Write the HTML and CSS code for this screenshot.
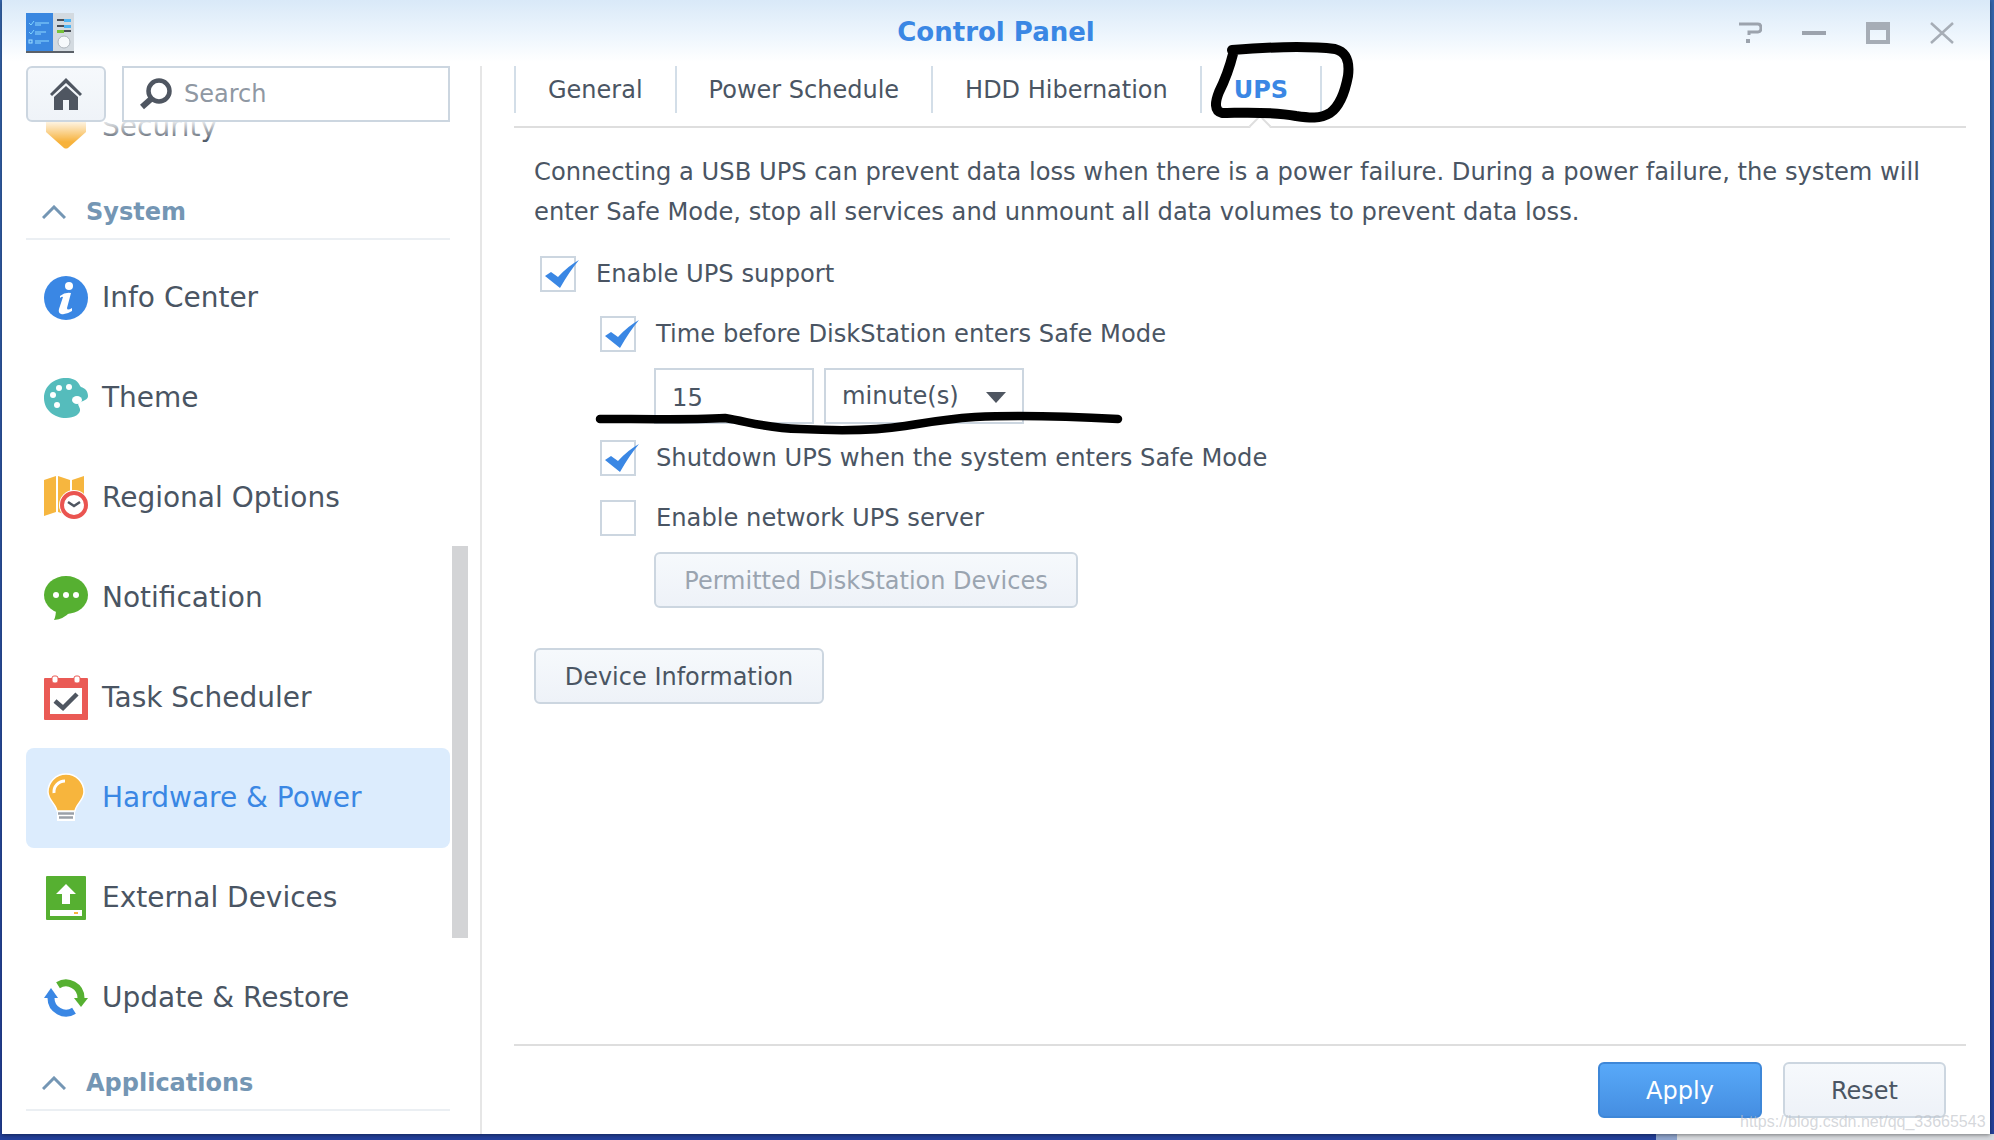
FILE: index.html
```html
<!DOCTYPE html>
<html lang="en">
<head>
    <meta charset="utf-8" />
    <title>Control Panel</title>
    <link rel="stylesheet" href="styles.css">
</head>
<body>
    <div class="window">
        <div class="titlebar">
            <svg class="app-icon" viewBox="0 0 48 40">
                <rect x="0" y="0" width="27" height="39" fill="#3a87e0"/>
                <rect x="27" y="0" width="21" height="39" fill="#d3dae0"/>
                <rect x="0" y="38" width="48" height="2" fill="#5a6068"/>
                <path d="M3 10l2 2 3-4M3 19l2 2 3-4" stroke="#7fd4ff" fill="none"/>
                <rect x="3" y="27" width="3" height="3" fill="none" stroke="#9fe0ff"/>
                <path d="M9 10h14M9 12h6M9 19h11M9 21h6M9 28h14M9 30h6" stroke="#8fd8ff"/>
                <path d="M31 7h14M31 13h14M31 18h14" stroke="#4a5058" stroke-width="2"/>
                <rect x="38" y="6" width="7" height="3" fill="#4fb4f4"/>
                <rect x="38" y="12" width="7" height="3" fill="#4fb4f4"/>
                <rect x="31" y="17" width="7" height="3" fill="#76c23a"/>
                <circle cx="38" cy="29" r="6" fill="#f6f9fb" stroke="#aeb6bd"/>
            </svg>
            <h1 class="title">Control Panel</h1>
            <div class="win-controls">
                <svg viewBox="0 0 24 22"><path d="M1 2h19q3 0 3 4t-3 4h-9v3" fill="none" stroke="#9ca3ad" stroke-width="3"/><rect x="8" y="17" width="4" height="4" fill="#9ca3ad"/></svg>
                <svg viewBox="0 0 24 22"><rect x="0" y="9" width="24" height="4" fill="#9ca3ad"/></svg>
                <svg viewBox="0 0 24 22"><path d="M0 0h24v22H0zM4 8v10h16V8z" fill="#a6adb6" fill-rule="evenodd"/></svg>
                <svg viewBox="0 0 24 22"><path d="M1 1l22 20M23 1L1 21" stroke="#a6adb6" stroke-width="2.5"/></svg>
            </div>
        </div>

        <div class="body">
            <aside class="sidebar">
                <div class="toolbar">
                    <button class="home-btn">
                        <svg viewBox="0 0 32 32" width="32" height="32"><path d="M16 0L32 16l-2 2L16 5 2 18l-2-2z" fill="#4f5661"/><path d="M16 8L28 19v13H19V22h-6v10H4V19z" fill="#4f5661"/></svg>
                    </button>
                    <div class="search">
                        <svg viewBox="0 0 32 32" width="32" height="32"><circle cx="19" cy="13" r="10.500" fill="none" stroke="#4f5661" stroke-width="4.500"/><path d="M11 21L2 29" stroke="#4f5661" stroke-width="6"/></svg>
                        <span>Search</span>
                    </div>
                </div>

                <div class="nav">
                    <div class="nav-item nav-item-scrolled">
                        <svg class="nav-icon" viewBox="0 0 44 44"><path d="M2 0h40v27L24 43q-2 1-4 0L2 27z" fill="#f7b23b"/></svg>
                        <span>Security</span>
                    </div>
                    <div class="nav-section">
                        <svg viewBox="0 0 24 14" width="24" height="14"><path d="M1 13L12 2l11 11" fill="none" stroke="#7496b4" stroke-width="3"/></svg>
                        <span>System</span>
                    </div>
                    <div class="nav-item">
                        <svg class="nav-icon" viewBox="0 0 44 44"><circle cx="22" cy="22" r="22" fill="#3a87e4"/><circle cx="25" cy="10" r="4" fill="#fff"/><path d="M16 20Q21 16 27 17L23 32Q23 35 28 32L28 35Q22 39 17 38 14 37 15 33L19 21Q18 20 16 22z" fill="#fff"/></svg>
                        <span>Info Center</span>
                    </div>
                    <div class="nav-item">
                        <svg class="nav-icon" viewBox="0 0 44 44"><path d="M22 2C10 2 0 10 0 22c0 12 10 20 22 20 8 0 15-4 14-9-1-4-4-5 1-7 4-2 7-3 7-6 0-5-3-8-7-9C35 9 34 2 22 2z" fill="#55bcbc"/><circle cx="15" cy="12" r="3" fill="#fff"/><circle cx="25" cy="11" r="3" fill="#fff"/><circle cx="9" cy="19" r="3" fill="#fff"/><ellipse cx="33" cy="24" rx="5" ry="4" fill="#fff"/><circle cx="13" cy="29" r="3" fill="#fff"/></svg>
                        <span>Theme</span>
                    </div>
                    <div class="nav-item">
                        <svg class="nav-icon" viewBox="0 0 44 44"><path d="M0 4L12 0v36L0 40zM14 0l12 4v36l-12-4zM28 4l12-4v36l-12 4z" fill="#f6b63f"/><circle cx="30" cy="29" r="15" fill="#fff"/><circle cx="30" cy="29" r="12" fill="#fff" stroke="#ea5450" stroke-width="4"/><path d="M24 26l6 4 6-4" fill="none" stroke="#4f5661" stroke-width="2.500"/></svg>
                        <span>Regional Options</span>
                    </div>
                    <div class="nav-item">
                        <svg class="nav-icon" viewBox="0 0 44 44"><ellipse cx="22" cy="19" rx="22" ry="19" fill="#56b031"/><path d="M12 33q0 7-2 11 10-1 16-8z" fill="#56b031"/><circle cx="12" cy="19" r="3" fill="#fff"/><circle cx="22" cy="19" r="3" fill="#fff"/><circle cx="32" cy="19" r="3" fill="#fff"/></svg>
                        <span>Notification</span>
                    </div>
                    <div class="nav-item">
                        <svg class="nav-icon" viewBox="0 0 44 44"><rect x="0" y="2" width="44" height="42" rx="1" fill="#ea5a55"/><rect x="6" y="12" width="32" height="26" fill="#fff"/><rect x="8" y="0" width="6" height="7" rx="2" fill="#fff" stroke="#ea5a55"/><rect x="30" y="0" width="6" height="7" rx="2" fill="#fff" stroke="#ea5a55"/><path d="M11 25l8 7 14-14" fill="none" stroke="#4f5661" stroke-width="4.500"/></svg>
                        <span>Task Scheduler</span>
                    </div>
                    <div class="nav-item nav-item-active">
                        <svg class="nav-icon" viewBox="0 0 44 48"><path d="M22 0a18 18 0 0 1 18 18c0 8-8 12-9 19H13c-1-7-9-11-9-19A18 18 0 0 1 22 0z" fill="#f7b53d" stroke="#fff" stroke-width="1.500"/><path d="M10 19a11 11 0 0 1 11-12" fill="none" stroke="#fff" stroke-width="3"/><path d="M13 38h18v9H13z" fill="#fff"/><path d="M14 39.500h16M15 43.500h14" stroke="#9aa0a8" stroke-width="2.500"/></svg>
                        <span>Hardware &amp; Power</span>
                    </div>
                    <div class="nav-item">
                        <svg class="nav-icon" viewBox="0 0 44 44"><rect x="2" y="0" width="40" height="44" rx="1" fill="#56b031"/><path d="M22 8l10 10h-6v10h-8V18h-6z" fill="#fff"/><rect x="6" y="34" width="32" height="6" fill="#fff"/><rect x="30" y="36" width="4" height="2" fill="#f6b63f"/></svg>
                        <span>External Devices</span>
                    </div>
                    <div class="nav-item">
                        <svg class="nav-icon" viewBox="0 0 44 44"><path d="M14 9.300A15 15 0 0 1 37 22" fill="none" stroke="#56b031" stroke-width="7"/><path d="M30 22h14l-7 9z" fill="#56b031"/><path d="M30 34.700A15 15 0 0 1 7 22" fill="none" stroke="#3a87e4" stroke-width="7"/><path d="M0 22h14L7 12z" fill="#3a87e4"/></svg>
                        <span>Update &amp; Restore</span>
                    </div>
                    <div class="nav-section">
                        <svg viewBox="0 0 24 14" width="24" height="14"><path d="M1 13L12 2l11 11" fill="none" stroke="#7496b4" stroke-width="3"/></svg>
                        <span>Applications</span>
                    </div>
                </div>
                <div class="scrollbar"></div>
            </aside>

            <main class="main">
                <div class="tabs">
                    <div class="tab">General</div>
                    <div class="tab">Power Schedule</div>
                    <div class="tab">HDD Hibernation</div>
                    <div class="tab tab-active">UPS</div>
                </div>

                <div class="content">
                    <p class="intro">Connecting a USB UPS can prevent data loss when there is a power failure. During a power failure, the system will enter Safe Mode, stop all services and unmount all data volumes to prevent data loss.</p>

                    <div class="check-row row-top">
                        <span class="checkbox"><svg viewBox="0 0 40 32" width="40" height="32"><path d="M5 20l6-4 7 5Q28 10 39 4 29 16 20 32z" fill="#3a87e4"/></svg></span>
                        <span>Enable UPS support</span>
                    </div>
                    <div class="check-row row-sub">
                        <span class="checkbox"><svg viewBox="0 0 40 32" width="40" height="32"><path d="M5 20l6-4 7 5Q28 10 39 4 29 16 20 32z" fill="#3a87e4"/></svg></span>
                        <span>Time before DiskStation enters Safe Mode</span>
                    </div>
                    <div class="field-row">
                        <div class="text-input">15</div>
                        <div class="select">
                            <span>minute(s)</span>
                            <i class="select-arrow"></i>
                        </div>
                    </div>
                    <div class="check-row row-sub row-tight">
                        <span class="checkbox"><svg viewBox="0 0 40 32" width="40" height="32"><path d="M5 20l6-4 7 5Q28 10 39 4 29 16 20 32z" fill="#3a87e4"/></svg></span>
                        <span>Shutdown UPS when the system enters Safe Mode</span>
                    </div>
                    <div class="check-row row-sub">
                        <span class="checkbox"></span>
                        <span>Enable network UPS server</span>
                    </div>
                    <button class="btn btn-permitted" disabled>Permitted DiskStation Devices</button>
                    <button class="btn btn-device">Device Information</button>
                </div>

                <div class="footer">
                    <button class="btn btn-apply">Apply</button>
                    <button class="btn btn-reset">Reset</button>
                </div>
            </main>
        </div>
    </div>

    <div class="desktop">
        <div class="desktop-dark"></div>
        <div class="desktop-mid"></div>
        <div class="desktop-light"></div>
    </div>

    <!-- pen marks drawn on top of the screenshot -->
    <svg class="scribble" viewBox="0 0 1994 1140">
        <path d="M1232 50C1270 47 1310 46 1335 49 1346 52 1350 60 1348 76 1345 92 1340 106 1330 113 1320 119 1310 118 1296 116 1270 111 1240 113 1222 113 1214 111 1215 102 1219 92 1226 78 1230 66 1233 54" fill="none" stroke="#000" stroke-width="10" stroke-linecap="round" stroke-linejoin="round"/>
        <path d="M600 419C640 419 690 420 725 418 750 422 765 428 800 429 840 431 880 430 905 426 930 422 945 419 975 417 1020 415 1080 417 1118 419" fill="none" stroke="#000" stroke-width="8.500" stroke-linecap="round"/>
    </svg>

    <div class="watermark">https://blog.csdn.net/qq_33665543</div>
</body>
</html>
```

FILE: styles.css
```css
* {
    box-sizing: border-box;
}
html, body {
    margin: 0;
    height: 1140px;
    overflow: hidden;
}
body {
    position: relative;
    font-family: "DejaVu Sans", Verdana, sans-serif;
    font-size: 24.2px;
    color: #4a5563;
    background: linear-gradient(#3566ad, #23409a);
    padding-left: 2px;
}
svg {
    display: block;
    flex: none;
}
button {
    font-family: inherit;
    font-size: inherit;
}

.window {
    position: relative;
    z-index: 1;
    width: 1988px;
    height: 1134px;
    background-color: #fff;
    box-shadow: 0 1px 4px rgba(0, 0, 0, 0.45);
    display: flex;
    flex-direction: column;
}

.titlebar {
    height: 66px;
    flex: none;
    display: grid;
    grid-template-columns: 1fr auto 1fr;
    align-items: start;
    padding: 13px 36px 0;
    background: linear-gradient(#d9e9f8, #eef6fd 36px, #fff 62px);
}
.app-icon {
    width: 48px;
    height: 40px;
    margin-left: -12px;
}
.title {
    margin: 3px 0 0;
    font-size: 26px;
    font-weight: bold;
    color: #3a87e4;
    line-height: 32px;
}
.win-controls {
    display: flex;
    justify-content: flex-end;
    gap: 40px;
    margin-top: 9px;
}
.win-controls svg {
    width: 24px;
    height: 22px;
}

.body {
    flex: 1;
    min-height: 0;
    display: flex;
}

.sidebar {
    position: relative;
    width: 480px;
    flex: none;
    padding-left: 24px;
    padding-right: 30px;
    border-right: 2px solid #e6e6e6;
    display: flex;
    flex-direction: column;
}
.toolbar {
    display: flex;
    gap: 16px;
    height: 56px;
    flex: none;
}
.home-btn {
    width: 80px;
    height: 56px;
    padding: 0;
    border: 2px solid #ccd6e0;
    border-radius: 6px;
    background: linear-gradient(#f6f9fc, #eff3f8);
    display: flex;
    align-items: center;
    justify-content: center;
}
.search {
    flex: 1;
    display: flex;
    align-items: center;
    gap: 12px;
    padding-left: 16px;
    border: 2px solid #ccd6e0;
    background-color: #fff;
    color: #8f98a3;
    font-size: 24px;
}

.nav {
    position: relative;
    flex: 1;
    overflow: hidden;
}
.nav::before {
    content: "";
    position: absolute;
    left: 0;
    right: 0;
    top: 0;
    height: 20px;
    background: linear-gradient(rgba(255, 255, 255, 0.85), rgba(255, 255, 255, 0));
    z-index: 1;
}
.nav-item {
    height: 100px;
    display: flex;
    align-items: center;
    gap: 14px;
    padding-left: 18px;
    border-radius: 8px;
    font-size: 28px;
}
.nav-item span {
    margin-bottom: 2px;
}
.nav-item-scrolled {
    margin-top: -45px;
}
.nav-item-active {
    background-color: #dcecfd;
    color: #3a87e4;
}
.nav-icon {
    width: 44px;
    height: 44px;
    overflow: visible;
}
.nav-item-active .nav-icon {
    height: 48px;
}
.nav-section {
    height: 63px;
    display: flex;
    align-items: center;
    gap: 20px;
    padding: 8px 0 0 16px;
    border-bottom: 2px solid #ebeff3;
    font-size: 24px;
    font-weight: bold;
    color: #7496b4;
}
.nav-section + .nav-item {
    margin-top: 8px;
}
.scrollbar {
    position: absolute;
    left: 450px;
    top: 480px;
    width: 16px;
    height: 392px;
    background-color: #d3d4d6;
}

.main {
    flex: 1;
    min-width: 0;
    display: flex;
    flex-direction: column;
    padding: 0 24px 16px 32px;
}
.tabs {
    position: relative;
    height: 62px;
    flex: none;
    display: flex;
    align-items: flex-start;
    border-bottom: 2px solid #dedede;
    font-size: 24px;
}
.tab {
    height: 47px;
    display: flex;
    align-items: center;
    padding: 0 32px;
    border-left: 2px solid #d3dee8;
}
.tab-active {
    position: relative;
    border-right: 2px solid #d3dee8;
    font-weight: bold;
    color: #3a87e4;
}
.tab-active::after {
    content: "";
    position: absolute;
    left: 50px;
    top: 52px;
    width: 14px;
    height: 14px;
    background-color: #fff;
    border-left: 2px solid #dedede;
    border-top: 2px solid #dedede;
    transform: rotate(45deg);
}

.content {
    flex: 1;
    padding: 24px 0 0 20px;
}
.intro {
    margin: 0;
    line-height: 40px;
}
.check-row {
    display: flex;
    align-items: center;
    gap: 20px;
    height: 36px;
    margin-top: 24px;
}
.row-top {
    margin-left: 6px;
}
.row-sub {
    margin-left: 66px;
}
.row-tight {
    margin-top: 16px;
}
.checkbox {
    width: 36px;
    height: 36px;
    flex: none;
    border: 2px solid #ccd6e0;
    background-color: #fff;
}
.checkbox svg {
    margin: -2px;
    overflow: visible;
}
.field-row {
    display: flex;
    gap: 10px;
    margin: 16px 0 0 120px;
}
.text-input, .select {
    height: 56px;
    border: 2px solid #ccd6e0;
    display: flex;
    align-items: center;
}
.text-input {
    width: 160px;
    padding: 4px 0 0 16px;
}
.select {
    width: 200px;
    padding: 0 16px;
    justify-content: space-between;
}
.select-arrow {
    border-left: 10px solid transparent;
    border-right: 10px solid transparent;
    border-top: 11px solid #4f5661;
    margin-top: 3px;
}

.btn {
    display: block;
    height: 56px;
    padding: 2px 0 0;
    color: #4a5563;
    border: 2px solid #ccd6e0;
    border-radius: 6px;
    background: linear-gradient(#f6f9fc, #eef2f8);
    font-size: 24px;
}
.btn-permitted {
    width: 424px;
    margin: 16px 0 0 120px;
    color: #9aa4b0;
}
.btn-device {
    width: 290px;
    margin-top: 40px;
}
.footer {
    display: flex;
    justify-content: flex-end;
    gap: 21px;
    padding: 16px 20px 0 0;
    border-top: 2px solid #dedede;
}
.btn-apply {
    width: 164px;
    color: #fff;
    border-color: #3e87d8;
    background: linear-gradient(#58a9f9, #458ee1);
}
.btn-reset {
    width: 163px;
}

.desktop {
    position: absolute;
    left: 0;
    right: 0;
    bottom: 0;
    height: 6px;
    display: flex;
}
.desktop-dark {
    width: 1656px;
    background-color: #23409a;
}
.desktop-mid {
    width: 21px;
    background-color: #8ea4cc;
}
.desktop-light {
    flex: 1;
    background-color: #d7dade;
}

.scribble {
    position: absolute;
    z-index: 2;
    left: 0;
    top: 0;
    width: 1994px;
    height: 1140px;
    pointer-events: none;
}
.watermark {
    position: absolute;
    z-index: 2;
    left: 1740px;
    top: 1112px;
    font-family: "Liberation Sans", Arial, sans-serif;
    font-size: 16px;
    line-height: 20px;
    white-space: nowrap;
    color: rgba(190, 194, 200, 0.65);
}
```
